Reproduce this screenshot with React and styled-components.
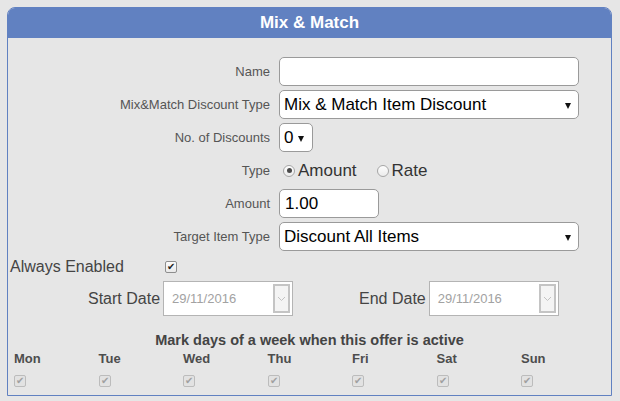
import React from 'react';
import styled, { createGlobalStyle } from 'styled-components';

const GlobalStyle = createGlobalStyle`
  html, body {
    margin: 0;
    padding: 0;
    background: #e6e6e6;
    font-family: "Liberation Sans", Arial, sans-serif;
  }
`;

const Page = styled.div`
  padding: 7px 8px 0 7px;
  width: 620px;
  height: 401px;
  box-sizing: border-box;
`;

const Panel = styled.section`
  width: 605px;
  height: 389px;
  box-sizing: border-box;
  border: 1px solid #6181c1;
  border-radius: 8px 8px 0 0;
  overflow: hidden;
`;

const Header = styled.h2`
  margin: 0;
  height: 30px;
  line-height: 29px;
  background: #6181c1;
  color: #fff;
  font-size: 17px;
  font-weight: bold;
  text-align: center;
`;

const FormGrid = styled.div`
  display: grid;
  grid-template-columns: 262px 300px;
  grid-auto-rows: 29px;
  column-gap: 9px;
  row-gap: 4px;
  padding-top: 19px;
`;

const Label = styled.label`
  display: flex;
  align-items: center;
  justify-content: flex-end;
  font-size: 13px;
  color: #555;
`;

const Field = styled.div`
  display: flex;
  align-items: center;
`;

const TextBox = styled.input`
  box-sizing: border-box;
  width: ${({ $width }) => $width || 300}px;
  height: 29px;
  border: 1px solid #9a9a9a;
  border-radius: 5px;
  background: #fff;
  padding: 0 5px;
  font-family: inherit;
  font-size: 17px;
  color: #000;
  outline: none;
`;

const SelectBox = styled.div`
  position: relative;
  box-sizing: border-box;
  width: ${({ $width }) => $width || 300}px;
  height: 29px;
  border: 1px solid #9a9a9a;
  border-radius: 5px;
  background: #fff;

  select {
    appearance: none;
    width: 100%;
    height: 100%;
    border: 0;
    background: transparent;
    padding: 0 0 0 4px;
    font-family: "Liberation Sans", Arial, sans-serif;
    font-size: 17px;
    color: #000;
    outline: none;
  }

  &::after {
    content: '';
    position: absolute;
    right: ${({ $arrowRight }) => $arrowRight ?? 7}px;
    top: 12px;
    border-left: 3.5px solid transparent;
    border-right: 3.5px solid transparent;
    border-top: 6px solid #111;
    pointer-events: none;
  }
`;

const RadioGroup = styled.div`
  display: flex;
  align-items: center;
  padding-left: 4px;
  gap: 20px;
`;

const RadioOption = styled.span`
  display: flex;
  align-items: center;
  gap: 3px;
  font-size: 17px;
  color: #333;
`;

const RadioDot = styled.span`
  position: relative;
  box-sizing: border-box;
  width: 12px;
  height: 12px;
  border: 1px solid #a6a6a6;
  border-radius: 50%;
  background: linear-gradient(#fdfdfd, #ececec);

  &::after {
    content: '';
    display: ${({ $on }) => ($on ? 'block' : 'none')};
    position: absolute;
    left: 2.5px;
    top: 2.5px;
    width: 5px;
    height: 5px;
    border-radius: 50%;
    background: #4a4a4a;
  }
`;

const Check = styled.span`
  display: inline-flex;
  align-items: center;
  justify-content: center;
  box-sizing: border-box;
  width: 12px;
  height: 12px;
  border: 1px solid ${({ $disabled }) => ($disabled ? '#bcbcbc' : '#8e8e8e')};
  border-radius: 2px;
  background: ${({ $disabled }) => ($disabled ? '#e2e2e2' : 'linear-gradient(#fcfcfc, #e9e9e9)')};
  color: ${({ $disabled }) => ($disabled ? '#a0a0a0' : '#222')};
  font-size: 10px;
  line-height: 1;
`;

const AlwaysRow = styled.div`
  display: flex;
  align-items: center;
  height: 20px;
  margin-top: 6px;
  padding-left: 2px;
  font-size: 16px;
  color: #444;

  span:first-child {
    width: 155px;
  }
`;

const DateRow = styled.div`
  display: flex;
  align-items: center;
  margin-top: 4px;
  padding-left: 80px;
`;

const DateGroup = styled.div`
  display: flex;
  align-items: center;
  gap: 3px;
  margin-right: ${({ $gap }) => $gap || 0}px;
  font-size: 16px;
  color: #444;
`;

const DateBox = styled.div`
  display: flex;
  align-items: center;
  justify-content: space-between;
  box-sizing: border-box;
  width: 130px;
  height: 35px;
  border: 1px solid #b4b4b4;
  background: #fff;
  padding: 2px 2px 2px 8px;
  font-size: 13px;
  color: #a2a2a2;
`;

const DateButton = styled.span`
  display: flex;
  align-items: center;
  justify-content: center;
  box-sizing: border-box;
  width: 17px;
  height: 100%;
  border: 2px solid #c4c4c4;
  background: #f4f4f4;
`;

const WeekTitle = styled.h3`
  margin: 16px 0 0;
  font-size: 14.5px;
  line-height: 16px;
  font-weight: bold;
  color: #444;
  text-align: center;
`;

const DaysGrid = styled.div`
  display: grid;
  grid-template-columns: repeat(7, 84.5px);
  row-gap: 4px;
  margin-top: 3px;
  padding-left: 6px;
`;

const DayName = styled.span`
  font-size: 13px;
  line-height: 15px;
  font-weight: bold;
  color: #4d4d4d;
`;

const Chevron = () => (
  <svg width="9" height="6" viewBox="0 0 9 6">
    <path d="M1 1 L4.5 4.5 L8 1" fill="none" stroke="#c2c2c2" strokeWidth="1" />
  </svg>
);

const days = ['Mon', 'Tue', 'Wed', 'Thu', 'Fri', 'Sat', 'Sun'];

const App = () => (
  <>
    <GlobalStyle />
    <Page>
      <Panel>
        <Header>Mix &amp; Match</Header>

        <FormGrid>
          <Label>Name</Label>
          <Field>
            <TextBox defaultValue="" />
          </Field>

          <Label>Mix&amp;Match Discount Type</Label>
          <Field>
            <SelectBox>
              <select defaultValue="item">
                <option value="item">Mix &amp; Match Item Discount</option>
              </select>
            </SelectBox>
          </Field>

          <Label>No. of Discounts</Label>
          <Field>
            <SelectBox $width={34} $arrowRight={8}>
              <select defaultValue="0">
                <option value="0">0</option>
              </select>
            </SelectBox>
          </Field>

          <Label>Type</Label>
          <Field>
            <RadioGroup>
              <RadioOption>
                <RadioDot $on />
                Amount
              </RadioOption>
              <RadioOption>
                <RadioDot />
                Rate
              </RadioOption>
            </RadioGroup>
          </Field>

          <Label>Amount</Label>
          <Field>
            <TextBox $width={100} defaultValue="1.00" />
          </Field>

          <Label>Target Item Type</Label>
          <Field>
            <SelectBox>
              <select defaultValue="all">
                <option value="all">Discount All Items</option>
              </select>
            </SelectBox>
          </Field>
        </FormGrid>

        <AlwaysRow>
          <span>Always Enabled</span>
          <Check>✔</Check>
        </AlwaysRow>

        <DateRow>
          <DateGroup $gap={66}>
            Start Date
            <DateBox>
              29/11/2016
              <DateButton>
                <Chevron />
              </DateButton>
            </DateBox>
          </DateGroup>
          <DateGroup>
            End Date
            <DateBox>
              29/11/2016
              <DateButton>
                <Chevron />
              </DateButton>
            </DateBox>
          </DateGroup>
        </DateRow>

        <WeekTitle>Mark days of a week when this offer is active</WeekTitle>

        <DaysGrid>
          {days.map((d) => (
            <DayName key={d}>{d}</DayName>
          ))}
          {days.map((d) => (
            <span key={d}>
              <Check $disabled>✔</Check>
            </span>
          ))}
        </DaysGrid>
      </Panel>
    </Page>
  </>
);

export default App;
